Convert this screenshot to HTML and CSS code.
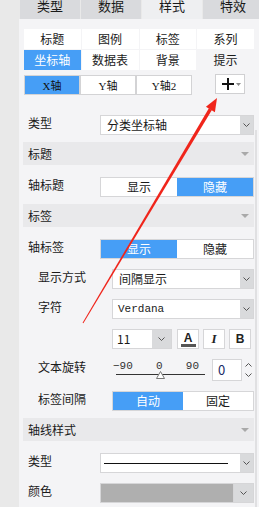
FILE: index.html
```html
<!DOCTYPE html>
<html lang="zh">
<head>
<meta charset="utf-8"/>
<title>样式设置</title>
<link rel="stylesheet" href="styles.css">
</head>
<body>
<div class="page">
  <!-- 顶部选项卡 -->
  <div class="tabs">
    <div class="tab">类型</div>
    <div class="tab">数据</div>
    <div class="tab active">样式</div>
    <div class="tab">特效</div>
  </div>

  <div class="panel">
    <div class="subtabs">
      <div class="subtab">标题</div>
      <div class="subtab">图例</div>
      <div class="subtab">标签</div>
      <div class="subtab">系列</div>
      <div class="subtab on">坐标轴</div>
      <div class="subtab">数据表</div>
      <div class="subtab">背景</div>
      <div class="subtab plain">提示</div>
    </div>

    <div class="axis-bar">
      <button class="axis on">X轴</button>
      <button class="axis">Y轴</button>
      <button class="axis">Y轴2</button>
      <button class="add-btn">
        <svg width="12" height="12" viewBox="0 0 12 12"><path d="M6 0V12M0 6H12" stroke="#111" stroke-width="2"/></svg>
        <svg class="mini" width="5" height="3" viewBox="0 0 5 3"><path d="M0 0H5L2.5 3Z" fill="#888"/></svg>
      </button>
    </div>

    <div class="form">
      <div class="row">
        <span class="label">类型</span>
        <div class="select"><span class="val">分类坐标轴</span><span class="drop"><svg width="7" height="4" viewBox="0 0 7 4"><path d="M0.5 0.5L3.5 3.5L6.5 0.5" fill="none" stroke="#555"/></svg></span></div>
      </div>

      <div class="head">标题<svg width="8" height="4" viewBox="0 0 8 4"><path d="M0 0H8L4 4Z" fill="#a9a9a9"/></svg></div>
      <div class="row">
        <span class="label">轴标题</span>
        <div class="toggle"><span>显示</span><span class="on">隐藏</span></div>
      </div>

      <div class="head">标签<svg width="8" height="4" viewBox="0 0 8 4"><path d="M0 0H8L4 4Z" fill="#a9a9a9"/></svg></div>
      <div class="row">
        <span class="label">轴标签</span>
        <div class="toggle"><span class="on">显示</span><span>隐藏</span></div>
      </div>
      <div class="row sub">
        <span class="label">显示方式</span>
        <div class="select"><span class="val">间隔显示</span><span class="drop"><svg width="7" height="4" viewBox="0 0 7 4"><path d="M0.5 0.5L3.5 3.5L6.5 0.5" fill="none" stroke="#555"/></svg></span></div>
      </div>
      <div class="row sub">
        <span class="label">字符</span>
        <div class="select"><span class="val mono">Verdana</span><span class="drop"><svg width="7" height="4" viewBox="0 0 7 4"><path d="M0.5 0.5L3.5 3.5L6.5 0.5" fill="none" stroke="#555"/></svg></span></div>
      </div>
      <div class="row sub">
        <span class="label"></span>
        <div class="fmt-row">
          <div class="select size-sel"><span class="val">11</span><span class="drop wide"><svg width="7" height="4" viewBox="0 0 7 4"><path d="M0.5 0.5L3.5 3.5L6.5 0.5" fill="none" stroke="#555"/></svg></span></div>
          <button class="fmt color-a"><span class="a">A</span><span class="bar"></span></button>
          <button class="fmt italic">I</button>
          <button class="fmt bold">B</button>
        </div>
      </div>
      <div class="row sub rot">
        <span class="label">文本旋转</span>
        <div class="rot-ctrl">
          <div class="slider">
            <div class="ticks"><span>−90</span><span>0</span><span>90</span></div>
            <div class="track"></div>
            <svg class="thumb" width="9" height="8" viewBox="0 0 9 8"><path d="M4.5 0.5L8.5 7.5H0.5Z" fill="#fff" stroke="#777"/></svg>
          </div>
          <div class="spin">
            <span class="spin-val">0</span>
            <span class="spin-arrows">
              <svg width="7" height="4" viewBox="0 0 7 4"><path d="M0.5 3.5L3.5 0.5L6.5 3.5" fill="none" stroke="#555"/></svg>
              <svg width="7" height="4" viewBox="0 0 7 4"><path d="M0.5 0.5L3.5 3.5L6.5 0.5" fill="none" stroke="#555"/></svg>
            </span>
          </div>
        </div>
      </div>
      <div class="row sub">
        <span class="label">标签间隔</span>
        <div class="toggle"><span class="on">自动</span><span>固定</span></div>
      </div>

      <div class="head">轴线样式<svg width="8" height="4" viewBox="0 0 8 4"><path d="M0 0H8L4 4Z" fill="#a9a9a9"/></svg></div>
      <div class="row">
        <span class="label">类型</span>
        <div class="select"><span class="val"><span class="line"></span></span><span class="drop"><svg width="7" height="4" viewBox="0 0 7 4"><path d="M0.5 0.5L3.5 3.5L6.5 0.5" fill="none" stroke="#555"/></svg></span></div>
      </div>
      <div class="row">
        <span class="label">颜色</span>
        <div class="select"><span class="val swatch"></span><span class="drop wide"><svg width="7" height="4" viewBox="0 0 7 4"><path d="M0.5 0.5L3.5 3.5L6.5 0.5" fill="none" stroke="#555"/></svg></span></div>
      </div>
    </div>
  </div>

  <div class="scroll"></div>

  <!-- 红色箭头 -->
  <svg class="arrow" width="259" height="507" viewBox="0 0 259 507">
    <path d="M83.4 323.3L82.6 322.7L208.9 108.3L211.9 110.1Z" fill="#f0251b"/>
    <path d="M217 98L214.9 112.2L205.9 106.8Z" fill="#f0251b"/>
  </svg>
</div>
</body>
</html>
```

FILE: styles.css
```css
* {
    box-sizing: border-box;
}

body {
    margin: 0;
    background: #e9e9e9;
    font-family: "Noto Sans CJK SC", sans-serif;
    font-size: 12px;
    color: #1a1a1a;
}

.page {
    position: relative;
    width: 259px;
    height: 507px;
    overflow: hidden;
}

/* 选项卡 */
.tabs {
    display: flex;
    gap: 1px;
    height: 25px;
    margin: -6px 0 0 20px;
}

.tab {
    flex: none;
    width: 60px;
    background: #d9dadd;
    font-size: 13px;
    line-height: 23px;
    text-align: center;
}

.tab.active {
    background: #eeeff1;
}

.panel {
    height: 488px;
    margin-left: 19px;
    padding-top: 10px;
    background: #f4f4f6;
}

.subtabs {
    display: grid;
    grid-template-columns: repeat(4, 1fr);
    gap: 1px;
    margin: 0 5px;
}

.subtab {
    height: 20px;
    line-height: 20px;
    text-align: center;
    background: #fff;
}

.subtab.on {
    background: #469ef6;
    color: #fff;
}

.subtab.plain {
    background: transparent;
}

.axis-bar {
    display: flex;
    margin: 5px 5px 0;
    height: 20px;
}

.axis {
    width: 56px;
    height: 20px;
    padding: 0;
    border: 1px solid #d3d3d5;
    background: #fff;
    color: #111;
    font-family: "Liberation Serif", "Noto Sans CJK SC", serif;
    font-size: 11px;
}

.axis.on {
    background: #469ef6;
}

.add-btn {
    display: flex;
    align-items: center;
    justify-content: center;
    gap: 2px;
    width: 30px;
    height: 20px;
    margin: -1px 0 0 23px;
    padding: 0 0 0 2px;
    border: 1px solid #d0d0d2;
    background: #fff;
}

.add-btn .mini {
    margin-top: 1px;
}

/* 表单 */
.form {
    margin-top: 20px;
    padding: 0 5px 0 4px;
}

.row {
    display: grid;
    grid-template-columns: 77px 1fr;
    height: 20px;
    margin-top: 10px;
}

.row:first-child {
    margin-top: 0;
}

.row.sub {
    grid-template-columns: 89px 1fr;
}

.label {
    align-self: start;
    padding-left: 5px;
    line-height: 16px;
    white-space: nowrap;
}

.row.sub .label {
    padding-left: 15px;
}

.head {
    display: flex;
    justify-content: space-between;
    align-items: center;
    height: 23px;
    margin-top: 7px;
    padding: 0 5px;
    background: #e9e9eb;
}

.head + .row {
    margin-top: 12px;
}

.select {
    display: flex;
    height: 20px;
    border: 1px solid #d6d6d8;
    background: #fff;
}

.select .val {
    flex: 1;
    display: flex;
    align-items: center;
    padding-left: 6px;
    line-height: 18px;
}

.select .val.mono {
    font-family: "Liberation Mono", monospace;
    font-size: 11px;
    padding-left: 5px;
}

.select .drop {
    display: flex;
    align-items: center;
    justify-content: center;
    width: 13px;
    background: #d9dadc;
}

.select .drop.wide {
    width: 19px;
}

.select .val .line {
    flex: 1;
    height: 1px;
    margin: 0 12px 0 -3px;
    background: #111;
}

.select .val.swatch {
    background: #afafaf;
    border-right: 1px solid #d6d6d8;
}

.toggle {
    display: flex;
    height: 20px;
    border: 1px solid #d6d6d8;
    background: #fff;
}

.toggle span {
    flex: 1;
    text-align: center;
    line-height: 18px;
}

.toggle span.on {
    background: #469ef6;
    color: #fff;
}

/* 字号 / 颜色 / 斜体 / 粗体 */
.fmt-row {
    display: flex;
}

.size-sel {
    width: 60px;
}

.size-sel .val {
    padding-left: 4px;
}

.fmt {
    display: flex;
    flex-direction: column;
    align-items: center;
    justify-content: center;
    width: 22px;
    height: 20px;
    margin-left: 4px;
    padding: 0;
    border: 1px solid #d6d6d8;
    background: #fff;
    color: #222;
}

.color-a {
    margin-left: 5px;
}

.color-a .a {
    font-family: "Liberation Sans", sans-serif;
    font-weight: bold;
    font-size: 12px;
    line-height: 10px;
    margin-top: 1px;
}

.color-a .bar {
    width: 15px;
    height: 3px;
    margin-top: 1px;
    background: #555;
}

.italic {
    font-family: "Liberation Serif", serif;
    font-style: italic;
    font-weight: bold;
    font-size: 13px;
}

.bold {
    font-family: "Liberation Sans", sans-serif;
    font-weight: bold;
    font-size: 12px;
}

/* 文本旋转 */
.row.rot {
    height: 22px;
}

.rot-ctrl {
    display: flex;
}

.slider {
    position: relative;
    width: 95px;
}

.ticks {
    display: flex;
    justify-content: space-between;
    margin-top: 1px;
    padding: 0 8px 0 1px;
    font-family: "Liberation Mono", monospace;
    font-size: 11px;
    line-height: 12px;
    color: #333;
}

.track {
    height: 1px;
    margin: 2px 2px 0 4px;
    background: #333;
}

.thumb {
    position: absolute;
    left: 44px;
    top: 12px;
}

.spin {
    display: flex;
    margin-left: 5px;
}

.spin-val {
    width: 30px;
    height: 22px;
    padding-left: 5px;
    border: 1px solid #d6d6d8;
    background: #fff;
    line-height: 20px;
    font-size: 13px;
    color: #1a2a66;
}

.spin-arrows {
    display: flex;
    flex-direction: column;
    justify-content: center;
    gap: 6px;
    padding-left: 3px;
}

.scroll {
    position: absolute;
    left: 255px;
    top: 130px;
    width: 2px;
    height: 377px;
    background: #e0e0e2;
}

.arrow {
    position: absolute;
    left: 0;
    top: 0;
    pointer-events: none;
}
```
